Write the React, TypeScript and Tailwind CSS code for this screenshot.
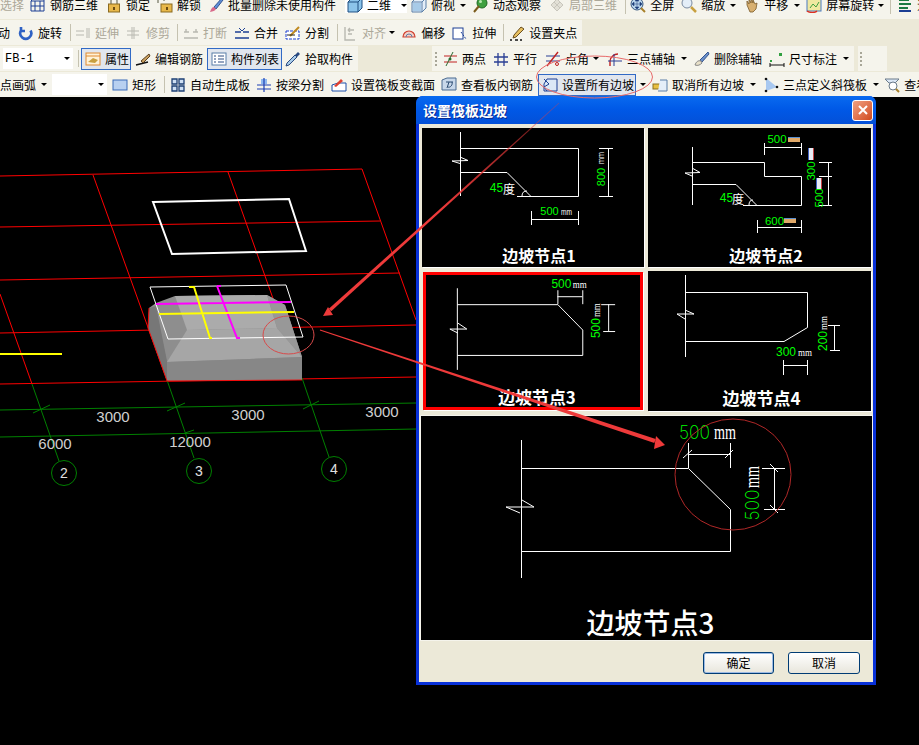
import type { ReactNode } from "react";

const Ic = ({ children }: { children: ReactNode }) => (
  <svg viewBox="0 0 16 16" className="w-4 h-4 shrink-0" fill="none">
    {children}
  </svg>
);

// toolbar icons
const icons: Record<string, ReactNode> = {
  grid: (<><path d="M1 4h13v10H1zM5 4v10M10 4v10M1 9h13" stroke="#1c3f94" /><path d="M1 4l3-3h10v3" stroke="#1c3f94" /></>),
  lock: (<><path d="M5 7V4a3 3 0 016 0v3" stroke="#8a8a7a" strokeWidth="1.5" /><rect x="2.5" y="7" width="11" height="8" fill="#e8b84a" stroke="#8a6a20" /><rect x="7" y="10" width="2" height="3" fill="#6a4a10" /></>),
  unlock: (<><path d="M1 6V3a3 3 0 016 0v1" stroke="#8a8a7a" strokeWidth="1.5" /><rect x="4" y="7" width="11" height="8" fill="#e8b84a" stroke="#8a6a20" /><rect x="9" y="10" width="2" height="3" fill="#6a4a10" /></>),
  brush: (<><path d="M14 1L6 10l2 2 7-9z" fill="#5f8fd8" stroke="#34558f" /><path d="M6 10c-2 0-3 2-4 5 3-.5 5-1 6-3z" fill="#d86a8a" /></>),
  cube: (<><path d="M1 5l4-4h10v10l-4 4H1z" fill="#8cc4ea" stroke="#1f4f80" /><path d="M1 5h10v10M11 5l4-4" stroke="#1f4f80" /></>),
  cube2: (<><path d="M1 5l4-4h10v10l-4 4H1z" fill="#e4eef8" stroke="#5a7fa8" /><path d="M1 5h10v10M11 5l4-4" stroke="#5a7fa8" /><rect x="2" y="6" width="8" height="8" fill="#a8cbe8" /></>),
  orbit: (<><circle cx="9" cy="6" r="5" fill="#3fa040" stroke="#1c6a20" /><path d="M6 9L1 15" stroke="#7a5a1a" strokeWidth="2" /><circle cx="7.5" cy="4.5" r="1.5" fill="#b8e8b0" /></>),
  fade: (<><path d="M2 8l6-6 6 6-6 6z" fill="#e2e0d6" stroke="#c8c6bc" /><path d="M5 5l6 6M11 5l-6 6" stroke="#c8c6bc" /></>),
  globe: (<><circle cx="7" cy="7" r="6" fill="#b8d4ea" stroke="#3a5a80" /><path d="M7 2v10M2 7h10M7 2L5 4h4zM7 12l-2-2h4zM2 7l2-2v4zM12 7l-2-2v4z" stroke="#1f3f78" fill="#1f3f78" strokeWidth=".5" /><path d="M11 11l4 4" stroke="#a8802a" strokeWidth="2" /></>),
  mag: (<><circle cx="6" cy="6" r="5" fill="#e4eef8" stroke="#7a8aa0" /><path d="M10 10l5 5" stroke="#c8a040" strokeWidth="2.5" /></>),
  hand: (<path d="M3 8V4l2 3V2l2 4V1l2 5V3l2 4 2-1-1 6-3 3H6z" fill="#d8b070" stroke="#7a5a2a" strokeWidth=".8" />),
  screen: (<><rect x="1" y="2" width="14" height="12" fill="#f0e8a0" stroke="#4a7ac0" /><path d="M4 11l3-4 3 3 3-5" stroke="#3fa040" /><path d="M1 14c3 2 8 2 10 0M15 2c-2-2-6-2-8 0" stroke="#e03020" strokeWidth="1.4" /></>),
  list: (<><path d="M2 3h10M2 7h12M2 11h9" stroke="#1c7a40" strokeWidth="2" /><path d="M2 14h12" stroke="#1c3f94" strokeWidth="2" /></>),
  rotate: (<path d="M12.5 5.5A5.5 5.5 0 113 5.5M3 2v4h4" stroke="#2f62c4" strokeWidth="2.6" />),
  extend: (<path d="M1 6h8M1 10h8M12 3v10M14 3v10" stroke="#b8b8b0" />),
  trim: (<path d="M1 6h12M1 10h12M6 2v12M8 2v12" stroke="#b8b8b0" />),
  breakl: (<path d="M1 7h5M10 7h5M1 13h14M3 4v3M13 4v3" stroke="#b8b8b0" strokeWidth="1.4" />),
  merge: (<><path d="M1 7h6M9 7h6M1 13h14" stroke="#1c3f94" strokeWidth="1.5" /><path d="M5 3l3 3 3-3" stroke="#1c3f94" /></>),
  split: (<><rect x="1" y="6" width="13" height="8" fill="#fff" stroke="#1c3fd4" strokeDasharray="3 1" /><path d="M5 11l9-9" stroke="#c08a20" strokeWidth="2" /><path d="M2 10h8" stroke="#222" /></>),
  align: (<path d="M3 2v13h10M6 5h6M6 9h4M6 5l2-2M6 5l2 2" stroke="#b8b8b0" strokeWidth="1.4" />),
  offset: (<><path d="M2 12a6 6 0 0112 0z" fill="#f4d0c8" stroke="#d04030" strokeWidth="1.2" /><path d="M5 12a3 3 0 016 0" stroke="#5a7fa8" /></>),
  stretch: (<><rect x="1" y="3" width="10" height="11" stroke="#1c3f94" fill="#fff" /><path d="M9 7l5 7" stroke="#1c3f94" strokeDasharray="2 1" /></>),
  grip: (<><path d="M1 15h2M6 15h3M11 15h2" stroke="#111" strokeWidth="1.5" /><path d="M12 2L5 10l-1 3 3-1 8-8z" fill="#e8c060" stroke="#6a5020" /></>),
  props: (<><rect x="1" y="2" width="14" height="12" fill="#fff2d8" stroke="#e08a30" /><path d="M1 5h14" stroke="#e08a30" /><path d="M3 11l5-4 5 2-3 3z" fill="#c8a040" /></>),
  editbar: (<><path d="M1 14l12-3" stroke="#111" strokeWidth="1.4" /><path d="M6 10l8-7 1 2-7 7z" fill="#c8a060" stroke="#5a4020" /></>),
  complist: (<><rect x="1" y="2" width="14" height="12" fill="#fff" stroke="#5a7fa8" /><path d="M3 5h2M3 8h2M3 11h2M7 5h6M7 8h6M7 11h6" stroke="#2a4a80" /></>),
  pick: (<><path d="M13 1l2 2-3 3-2-2z" fill="#2a4a80" /><path d="M10 4l2 2-8 8-3 1 1-3z" fill="#a8cbe8" stroke="#2a4a80" /></>),
  axis2: (<><path d="M2 5h13M2 11h13" stroke="#c02020" /><path d="M11 1L4 15" stroke="#2a6a30" /><circle cx="8" cy="8" r="1.5" fill="#2a6a30" /></>),
  parallel: (<path d="M1 6h14M1 11h14M5 2v13M11 2v13" stroke="#2a3f94" strokeWidth="1.3" />),
  angle: (<><path d="M1 5h14M1 10h14" stroke="#2a3f94" /><path d="M13 1L2 15" stroke="#c02020" strokeWidth="1.4" /><circle cx="12" cy="13" r="1.5" stroke="#c02020" /></>),
  arc: (<><path d="M3 15V10a8 8 0 018-7" stroke="#c02020" strokeWidth="1.4" /><path d="M1 10h14M7 3v12" stroke="#2a3f94" /></>),
  eraser: (<><path d="M14 1L6 9l2 2 7-8z" fill="#6a8fc8" stroke="#34558f" /><path d="M1 14c1-3 3-5 6-4l1 2c-2 2-4 3-7 2z" fill="#e8e0c8" stroke="#888" /></>),
  dim: (<><path d="M1 14h14M1 12v4M15 12v4" stroke="#111" /><rect x="10" y="2" width="3" height="3" fill="#30a040" /><rect x="1" y="9" width="2" height="2" fill="#30a040" /></>),
  rect: (<rect x="1" y="3" width="14" height="10" fill="#b8d0f0" stroke="#3a6ab8" />),
  auto: (<path d="M2 2h5v5H2zM9 2h5v5H9zM2 9h5v5H2zM9 9h5v5H9z" stroke="#1c3f74" strokeWidth="1.3" fill="#cfe0f4" />),
  beam: (<><rect x="5" y="2" width="6" height="5" fill="#8fb8f0" /><path d="M1 8h14M1 12h14M8 1v14" stroke="#1c3fb4" strokeWidth="1.2" /></>),
  section: (<><path d="M1 14V8l6-2h8v8z" fill="#fff" stroke="#1c4fa8" /><path d="M3 9l7-7 2 2-7 6z" fill="#e04030" /></>),
  view: (<><path d="M1 3l5-2h9v12H1z" fill="#c8d8ea" stroke="#4a6a90" /><path d="M5 5h7M8 5l-2 6M11 5c1 3-2 6-4 5" stroke="#2a4a70" /></>),
  allslope: (<><path d="M2 14V7l3-5h10v12z" fill="#dce8f6" stroke="#1c3f94" /><path d="M2 2l5 5-5 3 3 4" stroke="#1c3f94" /></>),
  cancelslope: (<><rect x="1" y="7" width="9" height="5" fill="#e8c040" stroke="#8a7020" /><path d="M8 3h7v11H6" fill="#e4eef8" stroke="#5a7fa8" /></>),
  triangle: (<><path d="M3 1v13l11-4z" fill="#a8c8f0" /><circle cx="3" cy="2" r="1.3" fill="#111" /><circle cx="3" cy="14" r="1.3" fill="#111" /><circle cx="14" cy="10" r="1.3" fill="#111" /></>),
  look: (<><path d="M1 2h14l-4 4H5z" fill="#dce8f6" stroke="#6a7a8a" /><circle cx="9" cy="9" r="4" fill="#fff" stroke="#6a7a8a" /><path d="M12 12l3 3" stroke="#a8802a" strokeWidth="2" /></>),
};

function Tool({ icon, label, className = "", muted = false }: { icon?: string; label: string; className?: string; muted?: boolean }) {
  return (
    <div className={`flex items-center gap-1 shrink-0 whitespace-nowrap ${muted ? "text-[#aca899]" : "text-black"} ${className}`}>
      {icon && <Ic>{icons[icon]}</Ic>}
      <span>{label}</span>
    </div>
  );
}

function ActiveTool({ icon, label, className }: { icon: string; label: string; className: string }) {
  return (
    <div className={`flex items-center gap-1 h-[22px] pl-[3px] shrink-0 whitespace-nowrap text-black border border-[#316ac5] bg-[#e1e6ee] ${className}`}>
      <Ic>{icons[icon]}</Ic>
      <span>{label}</span>
    </div>
  );
}

const Arrow = ({ className = "" }: { className?: string }) => (
  <div className={`w-0 h-0 shrink-0 border-x-[3px] border-t-[3px] border-x-transparent border-t-black ${className}`} />
);
const Sep = ({ className = "" }: { className?: string }) => <div className={`w-px h-[17px] shrink-0 bg-[#c5c2b0] ${className}`} />;
const Handle = ({ className = "" }: { className?: string }) => (
  <div className={`flex flex-col gap-[2px] shrink-0 ${className}`}>
    <div className="w-[2px] h-[2px] bg-[#a8a698]" />
    <div className="w-[2px] h-[2px] bg-[#a8a698]" />
    <div className="w-[2px] h-[2px] bg-[#a8a698]" />
    <div className="w-[2px] h-[2px] bg-[#a8a698]" />
  </div>
);

const Bar = ({ children, className = "" }: { children: ReactNode; className?: string }) => (
  <div className={`flex items-center h-[25px] bg-[#f5f4ec] shrink-0 ${className}`}>{children}</div>
);

function Toolbars() {
  return (
    <div className="flex flex-col gap-px h-[97px] shrink-0 bg-[#ece9d8] text-[12px] overflow-hidden">
      {/* first row, cut off by the top of the picture */}
      <div className="h-[19px] bg-[#f5f4ec] shrink-0">
        <div className="flex items-center h-[10px]">
          <Tool label="选择" muted />
          <Tool icon="grid" label="钢筋三维" className="ml-[6px]" />
          <Tool icon="lock" label="锁定" className="ml-[8px]" />
          <Tool icon="unlock" label="解锁" className="ml-[7px]" />
          <Tool icon="brush" label="批量删除未使用构件" className="ml-[7px]" />
          <div className="self-start ml-[9px] w-[62px] h-[13px] pl-[2px] bg-white shrink-0">
            <div className="flex items-center gap-1 h-[10px]">
              <Ic>{icons.cube}</Ic>
              <span>二维</span>
              <Arrow className="ml-[6px]" />
            </div>
          </div>
          <Tool icon="cube2" label="俯视" className="ml-[4px]" />
          <Arrow className="ml-[5px]" />
          <Tool icon="orbit" label="动态观察" className="ml-[7px]" />
          <Tool icon="fade" label="局部三维" className="ml-[8px]" muted />
          <Sep className="ml-[8px]" />
          <Tool icon="globe" label="全屏" className="ml-[4px]" />
          <Tool icon="mag" label="缩放" className="ml-[7px]" />
          <Arrow className="ml-[5px]" />
          <Tool icon="hand" label="平移" className="ml-[8px]" />
          <Arrow className="ml-[6px]" />
          <Tool icon="screen" label="屏幕旋转" className="ml-[6px]" />
          <Arrow className="ml-[4px]" />
          <Sep className="ml-[6px]" />
          <Tool icon="list" label="适" className="ml-[6px]" />
        </div>
      </div>

      <Bar className="w-[582px]">
        <Tool label="动" className="-ml-[2px]" />
        <Tool icon="rotate" label="旋转" className="ml-[8px]" />
        <Sep className="ml-[8px]" />
        <Tool icon="extend" label="延伸" className="ml-[4px]" muted />
        <Tool icon="trim" label="修剪" className="ml-[7px]" muted />
        <Sep className="ml-[7px]" />
        <Tool icon="breakl" label="打断" className="ml-[5px]" muted />
        <Tool icon="merge" label="合并" className="ml-[7px]" />
        <Tool icon="split" label="分割" className="ml-[7px]" />
        <Sep className="ml-[8px]" />
        <Tool icon="align" label="对齐" className="ml-[4px]" muted />
        <Arrow className="ml-[3px] border-t-[#aca899]" />
        <Tool icon="offset" label="偏移" className="ml-[6px]" />
        <Tool icon="stretch" label="拉伸" className="ml-[7px]" />
        <Sep className="ml-[7px]" />
        <Tool icon="grip" label="设置夹点" className="ml-[5px]" />
      </Bar>

      <div className="flex">
        <Bar className="w-[358px]">
          <div className="flex items-center justify-between ml-[3px] w-[70px] h-[21px] pl-[2px] pr-[3px] bg-white shrink-0">
            <span className="font-['Liberation_Mono',monospace]">FB-1</span>
            <Arrow />
          </div>
          <Sep className="ml-[5px]" />
          <ActiveTool icon="props" label="属性" className="ml-[2px] w-[50px]" />
          <Tool icon="editbar" label="编辑钢筋" className="ml-[4px]" />
          <ActiveTool icon="complist" label="构件列表" className="ml-[4px] w-[75px]" />
          <Tool icon="pick" label="拾取构件" className="ml-[3px]" />
        </Bar>
        <Bar className="w-[422px] ml-[74px]">
          <Handle className="ml-[3px]" />
          <Tool icon="axis2" label="两点" className="ml-[5px]" />
          <Tool icon="parallel" label="平行" className="ml-[7px]" />
          <Tool icon="angle" label="点角" className="ml-[8px]" />
          <Arrow className="ml-[4px]" />
          <Tool icon="arc" label="三点辅轴" className="ml-[8px]" />
          <Arrow className="ml-[6px]" />
          <Tool icon="eraser" label="删除辅轴" className="ml-[7px]" />
          <Tool icon="dim" label="尺寸标注" className="ml-[7px]" />
          <Arrow className="ml-[6px]" />
        </Bar>
        <Bar className="w-[29px] ml-[4px]">
          <Handle className="ml-[2px]" />
        </Bar>
      </div>

      <Bar className="w-full">
        <Tool label="点画弧" />
        <Arrow className="ml-[5px]" />
        <div className="flex items-center justify-end ml-[5px] w-[55px] h-[21px] pr-[3px] bg-white shrink-0">
          <Arrow />
        </div>
        <Tool icon="rect" label="矩形" className="ml-[5px]" />
        <Sep className="ml-[8px]" />
        <Tool icon="auto" label="自动生成板" className="ml-[5px]" />
        <Tool icon="beam" label="按梁分割" className="ml-[6px]" />
        <Tool icon="section" label="设置筏板变截面" className="ml-[7px]" />
        <Tool icon="view" label="查看板内钢筋" className="ml-[6px]" />
        <ActiveTool icon="allslope" label="设置所有边坡" className="ml-[5px] w-[98px]" />
        <Arrow className="ml-[4px]" />
        <Tool icon="cancelslope" label="取消所有边坡" className="ml-[6px]" />
        <Arrow className="ml-[6px]" />
        <Tool icon="triangle" label="三点定义斜筏板" className="ml-[7px]" />
        <Arrow className="ml-[6px]" />
        <Tool icon="look" label="查看" className="ml-[5px]" />
      </Bar>
    </div>
  );
}

// drawing on the black canvas, page coordinates
function Model() {
  const red = "#ff0000";
  const green = "#008000";
  const labels = [
    [113, 422, "3000"],
    [248, 420, "3000"],
    [382, 417, "3000"],
    [55, 449, "6000"],
    [190, 447, "12000"],
  ] as const;
  const axes = [
    [64, 473, "2"],
    [199, 471, "3"],
    [334, 469, "4"],
  ] as const;
  return (
    <svg viewBox="0 97 919 648" className="block w-full h-full">
      <g stroke={red} strokeWidth="1">
        <path d="M0 176L362 169M0 227L380 221M0 280L400 273M0 333L416 325M0 384L416 377" />
        <path d="M0 294L32 384M93 175L167 380M228 172L302 380M362 169L416 320" />
      </g>
      <g stroke={green} strokeWidth="1">
        <path d="M0 410L416 403M0 437L416 429" />
        <path d="M32 384L59 461M167 380L194 458M302 378L329 457" />
        <path d="M33 413L50 405M167 411L185 403M303 409L319 401M185 433L194 430" />
      </g>
      {/* slab */}
      <path d="M149 308L156 303L175 296L267 295L285 305L302 357V380L167 381L148 328z" fill="#8e8e8e" />
      <path d="M149 308L156 306L167 361V381L148 328z" fill="#777777" />
      <path d="M175 296L267 295L277 328L187 330z" fill="#ababab" />
      <path d="M187 330L277 328L302 357L167 362z" fill="#a6a6a6" />
      <path d="M267 295L285 305L302 357L277 328z" fill="#989898" />
      <path d="M167 362L302 357V380L167 381z" fill="#878787" />
      <path d="M149 308L148 328L167 381L302 380" fill="none" stroke={red} strokeWidth="1" strokeOpacity=".9" />
      <path d="M153 202L289 199L306 251L172 254z" fill="none" stroke="#fff" strokeWidth="2" />
      <path d="M150 287L286 285L303 337L168 339z" fill="none" stroke="#fff" strokeWidth="1" />
      <path d="M156 304L291 302M217 286H221M217 286L237 338H240" fill="none" stroke="#ff00ff" strokeWidth="2" />
      <path d="M159 314L294 312M189 287H194L210 338H212" fill="none" stroke="#ffff00" strokeWidth="2" />
      <path d="M0 354H62" stroke="#ffff00" strokeWidth="2" />
      <g fill="#d0d0d0" fontSize="15" className="[font-family:'Liberation_Sans',sans-serif]" textAnchor="middle">
        {labels.map(([x, y, t]) => (
          <text key={`${x}${t}`} x={x} y={y}>
            {t}
          </text>
        ))}
      </g>
      {axes.map(([x, y, t]) => (
        <g key={t}>
          <circle cx={x} cy={y} r="12.5" fill="none" stroke={green} />
          <text x={x} y={y + 5} fill="#e0e0e0" fontSize="14" textAnchor="middle" className="[font-family:'Liberation_Sans',sans-serif]">
            {t}
          </text>
        </g>
      ))}
    </svg>
  );
}

const cadFont = "[font-family:'Liberation_Sans',sans-serif]";

type DimProps = { x: number; y: number; t: string; size?: number; fill?: string; rotate?: boolean; serif?: boolean; len?: number; thin?: boolean };

function Dim({ x, y, t, size = 12, fill = "#00ff00", rotate = false, serif = false, len, thin = false }: DimProps) {
  const font = thin ? "[font-family:'Inter',sans-serif] font-extralight" : serif ? "[font-family:'Liberation_Serif',serif]" : cadFont;
  return (
    <text
      x={x}
      y={y}
      fill={fill}
      fontSize={size}
      textAnchor="middle"
      dominantBaseline="central"
      textLength={len}
      lengthAdjust={len ? "spacingAndGlyphs" : undefined}
      transform={rotate ? `rotate(-90 ${x} ${y})` : undefined}
      className={font}
    >
      {t}
    </text>
  );
}

const Title = ({ x, y, t, size = 16 }: { x: number; y: number; t: string; size?: number }) => (
  <text x={x} y={y} fill="#fff" fontSize={size} fontWeight={size > 20 ? 500 : 700} textAnchor="middle" dominantBaseline="central" className="[font-family:'Noto_Sans_CJK_SC',sans-serif]">
    {t}
  </text>
);

function Sketch({ viewBox, children }: { viewBox: string; children: ReactNode }) {
  return (
    <svg viewBox={viewBox} className="block w-full h-full bg-black">
      {children}
    </svg>
  );
}

const Ln = ({ d }: { d: string }) => <path d={d} fill="none" stroke="#fff" strokeWidth="1" />;
// the small "mm" of node 2 comes out as a coloured smear in the picture
const Mm = ({ x, y, w = 12 }: { x: number; y: number; w?: number }) => (
  <g>
    <rect x={x} y={y} width={w} height="5" fill="#e0a868" />
    <rect x={x} y={y} width={w} height="1" fill="#5a8fd0" />
  </g>
);
const MmV = ({ x, y, h = 12 }: { x: number; y: number; h?: number }) => (
  <g>
    <rect x={x} y={y} width="6" height={h} fill="#e8ecf4" />
    <rect x={x + 5} y={y} width="1" height={h} fill="#c04040" />
    <rect x={x} y={y} width="1" height={h} fill="#4060c0" />
  </g>
);

function Node1() {
  return (
    <Sketch viewBox="422 128 222 139">
      <Ln d="M460.5 132V196M460.5 148.5H578.5V196.5H517M460.5 172.5H507L531 196.5M460 157L468 160.5L452 161L460 163.5M522 196Q522 191 527 191" />
      <Ln d="M608.5 148V196M599 148.5H613M599 196.5H613M531.5 211V225M578.5 211V225M531 219.5H578" />
      <Dim x={496.5} y={188} t="45" />
      <text x={509} y={188} fill="#fff" fontSize="12" textAnchor="middle" dominantBaseline="central" className="[font-family:'Noto_Sans_CJK_SC',sans-serif]">度</text>
      <Dim x={601} y={177} t="800" size={11} rotate />
      <Dim x={601} y={158} t="mm" fill="#fff" size={9} len={12} rotate />
      <Dim x={549.5} y={211} t="500" size={11} />
      <Dim x={566.5} y={212} t="mm" fill="#fff" size={9} len={11} />
      <Title x={539} y={255} t="边坡节点1" />
    </Sketch>
  );
}

function Node2() {
  return (
    <Sketch viewBox="648 128 223 139">
      <Ln d="M692.5 147V205M692.5 162.5H764.5V176.5H801.5V205.5H743M692.5 184.5H736L757 205.5M692 168L700 172.5L685 173L692 176M749 205Q749 200 753 200" />
      <Ln d="M764.5 143V155M801.5 143V155M764 147.5H801M828.5 162V205M819 162.5H832M819 176.5H832M819 205.5H832M757.5 220V233M801.5 220V233M757 227.5H801" />
      <Dim x={777} y={139} t="500" size={11.5} />
      <Mm x={788} y={137} />
      <Dim x={811} y={171} t="300" size={11.5} rotate />
      <MmV x={808} y={148} />
      <Dim x={819} y={198} t="500" size={11.5} rotate />
      <MmV x={816} y={178} h={11} />
      <Dim x={774.5} y={221} t="600" size={11.5} />
      <Mm x={784} y={218} />
      <Dim x={726.5} y={198} t="45" />
      <text x={738} y={198} fill="#fff" fontSize="12" textAnchor="middle" dominantBaseline="central" className="[font-family:'Noto_Sans_CJK_SC',sans-serif]">度</text>
      <Title x={766} y={255} t="边坡节点2" />
    </Sketch>
  );
}

function Node3() {
  return (
    <Sketch viewBox="426 275 215 132">
      <Ln d="M457.5 288V370M457.5 304.5H558.5L583.5 330V355.5H457.5M458 323L467 329L450 329L458 333" />
      <Ln d="M558.5 290V304M583.5 290V304M558 296.5H583M609.5 304V331M602 304.5H616M604 331.5H616" />
      <Dim x={562} y={284} t="500" />
      <Dim x={580.5} y={284} t="mm" fill="#fff" size={11} len={14} serif />
      <Dim x={597} y={328} t="500" rotate />
      <Dim x={597} y={310} t="mm" fill="#fff" size={11} len={14} serif rotate />
      <Title x={537.5} y={397} t="边坡节点3" size={17} />
    </Sketch>
  );
}

function Node4() {
  return (
    <Sketch viewBox="648 271 223 140">
      <Ln d="M685.5 275V357M685.5 292.5H807.5V327.5L784 341.5H685.5M685 310L694 314L677 314L685 319" />
      <Ln d="M783.5 360V375M807.5 360V375M783 365.5H807M834.5 325V350M828 325.5H840M830 350.5H840" />
      <Dim x={786} y={352} t="300" />
      <Dim x={805} y={352} t="mm" fill="#fff" size={11} len={14} serif />
      <Dim x={823} y={341} t="200" rotate />
      <Dim x={823} y={323} t="mm" fill="#fff" size={11} len={14} serif rotate />
      <Title x={761.5} y={397} t="边坡节点4" size={17} />
    </Sketch>
  );
}

function NodeLarge() {
  return (
    <Sketch viewBox="421 416 451 224">
      <Ln d="M521.5 440V578M521.5 468.5H688.5L730.5 509.5V551.5H521.5M522 500L534 507L506 507L520 513" />
      <Ln d="M688.5 443V468M730.5 443V468M688 454.5H730M683 458L692 450M725 458L733 450M774.5 468V509M762 468.5H785M764 509.5H785M770 464L778 472M770 505L778 513" />
      <Dim x={694.5} y={432} t="500" size={19} len={31} thin />
      <Dim x={725} y={432} t="mm" fill="#fff" size={20} len={22} serif />
      <Dim x={752} y={505} t="500" size={19} len={31} thin rotate />
      <Dim x={752} y={477} t="mm" fill="#fff" size={20} len={22} serif rotate />
      <Title x={650.5} y={622} t="边坡节点3" size={28} />
    </Sketch>
  );
}

function Dialog() {
  return (
    <div className="absolute left-[416px] top-[96px] w-[460px] h-[589px] flex flex-col rounded-t-[7px] overflow-hidden bg-[#0831d9] [font-family:'Noto_Sans_CJK_SC',sans-serif]">
      <div className="flex items-center justify-between h-[28px] pl-[7px] pr-[3px] shrink-0 bg-gradient-to-b from-[#0a6af0] via-[#0058e6] to-[#0350d8]">
        <span className="text-[14px] font-bold text-white [text-shadow:1px_1px_0_#0a2a90]">设置筏板边坡</span>
        <div className="flex items-center justify-center w-[21px] h-[21px] rounded-[3px] border border-white bg-gradient-to-br from-[#f0a080] to-[#d04818]">
          <svg viewBox="0 0 12 12" className="w-3 h-3">
            <path d="M2 2l8 8M10 2l-8 8" stroke="#fff" strokeWidth="2" />
          </svg>
        </div>
      </div>
      <div className="flex flex-col flex-1 mx-[3px] mb-[3px] bg-[#ece9d8]">
        <div className="grid grid-cols-[222px_223px] grid-rows-[139px_140px] gap-x-[4px] gap-y-[4px] pl-[3px] pt-[4px]">
          <div className="shadow-[1px_1px_0_#fff]"><Node1 /></div>
          <div className="shadow-[1px_1px_0_#fff]"><Node2 /></div>
          <div className="m-px border-[3px] border-[#ff0000] shadow-[1px_1px_0_#fff]"><Node3 /></div>
          <div className="shadow-[1px_1px_0_#fff]"><Node4 /></div>
        </div>
        <div className="h-[224px] ml-[2px] mr-px mt-[5px] shadow-[0_0_0_1px_#f5f4ec]">
          <NodeLarge />
        </div>
        <div className="flex justify-end gap-[14px] pt-[12px] pr-[13px] text-[12px] text-black">
          <button className="w-[71px] h-[22px] rounded-[3px] border border-[#003c74] bg-gradient-to-b from-white to-[#e8e6dc] shadow-[inset_0_0_0_1px_#9dbbe4]">
            确定
          </button>
          <button className="w-[72px] h-[22px] rounded-[3px] border border-[#003c74] bg-gradient-to-b from-white to-[#e8e6dc]">
            取消
          </button>
        </div>
      </div>
    </div>
  );
}

// red hand-drawn marks laid over everything
function Annotations() {
  return (
    <svg viewBox="0 0 919 745" className="absolute inset-0 w-full h-full pointer-events-none">
      <defs>
        <linearGradient id="fade" gradientUnits="userSpaceOnUse" x1="559" y1="103" x2="440" y2="210">
          <stop offset="0" stopColor="#ee3a3a" stopOpacity=".35" />
          <stop offset="1" stopColor="#ee3a3a" />
        </linearGradient>
      </defs>
      <ellipse cx="594.5" cy="77" rx="58" ry="21" fill="none" stroke="#e86a6a" strokeWidth="1" />
      <ellipse cx="288.5" cy="335" rx="25.5" ry="19" fill="none" stroke="#d84a4a" strokeWidth="1" />
      <ellipse cx="733" cy="474.5" rx="58" ry="55.5" fill="none" stroke="#b02828" strokeWidth="1" />
      <path d="M559.3 103.3L558.7 102.7L328.8 308.7L331.2 311.3z" fill="url(#fade)" />
      <path d="M323 316L333 315L328 307z" fill="#ee3a3a" />
      <path d="M319.9 330.4L320.1 329.6L655.7 438.9L654.3 443.1z" fill="#ee3a3a" />
      <path d="M665 445L656 436L654 449z" fill="#ee3a3a" />
    </svg>
  );
}

export default function App() {
  return (
    <div className="relative flex flex-col w-[919px] h-[745px] overflow-hidden bg-black [font-family:'Noto_Sans_CJK_SC',sans-serif]">
      <Toolbars />
      <div className="flex-1 min-h-0">
        <Model />
      </div>
      <Dialog />
      <Annotations />
    </div>
  );
}
